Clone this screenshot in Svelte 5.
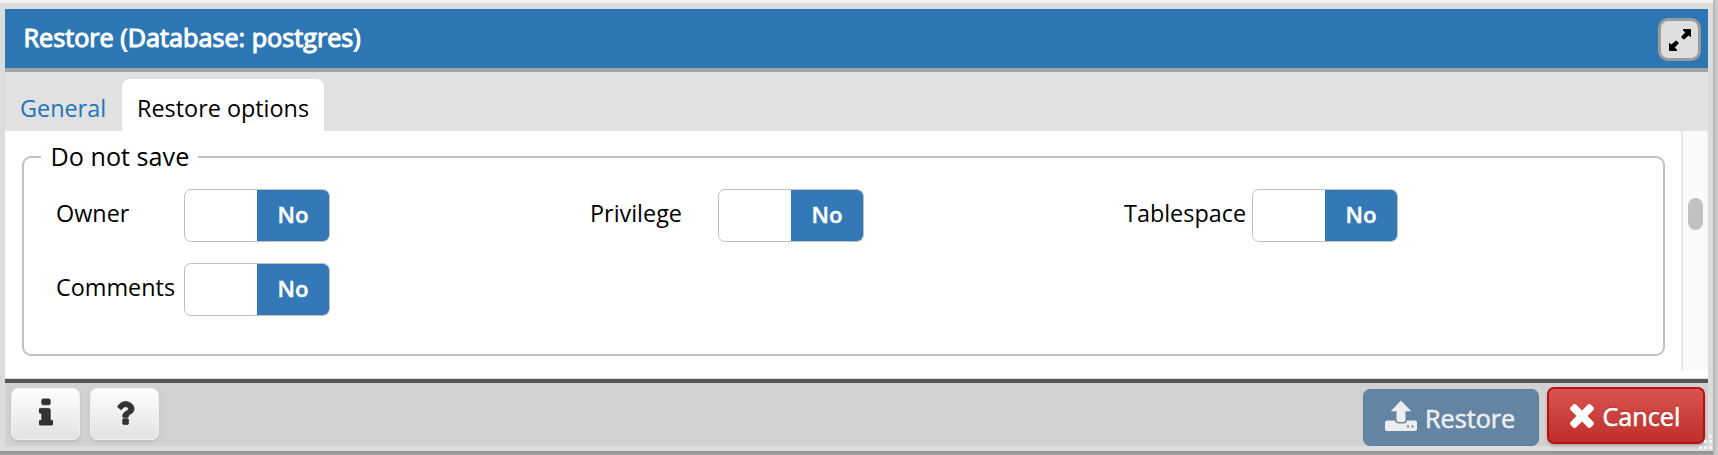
<script>
  const options = [
    { name: 'Owner', value: 'No' },
    { name: 'Privilege', value: 'No' },
    { name: 'Tablespace', value: 'No' },
    { name: 'Comments', value: 'No' }
  ];
</script>

<div class="page">
  <div class="dialog">
    <header>
      <h1>Restore (Database: postgres)</h1>
      <button class="expand" aria-label="Maximize">
        <svg width="24" height="24" viewBox="0 0 24 24">
          <path d="M15 1.5Q15 1 15.5 1H22Q23 1 23 2V8.5Q23 9.5 22.2 8.8L20.6 7.4L16.4 11.2Q15.6 11.6 15 11L13.6 9.6Q13 8.8 13.6 8.2L17.2 4.4L15.2 2.6ZM9 22.5Q9 23 8.5 23H2Q1 23 1 22V15.5Q1 14.5 1.8 15.2L3.4 16.6L7.6 12.8Q8.4 12.4 9 13L10.4 14.4Q11 15.2 10.4 15.8L6.8 19.6L8.8 21.4Z" />
        </svg>
      </button>
    </header>
    <nav>
      <span class="tab link">General</span>
      <span class="tab active">Restore options</span>
    </nav>
    <main>
      <div class="content">
        <section class="group">
          <div class="legend"><span>Do not save</span></div>
          <div class="options">
            {#each options as option}
              <div class="option">
                <span class="name">{option.name}</span>
                <span class="switch"><span class="on">{option.value}</span></span>
              </div>
            {/each}
          </div>
        </section>
      </div>
      <div class="track"><div class="thumb"></div></div>
    </main>
    <footer>
      <button class="small" aria-label="Info">
        <svg width="14" height="28" viewBox="576 80 640 1504" preserveAspectRatio="none"><path d="M1216 1344v128q0 26-19 45t-45 19h-512q-26 0-45-19t-19-45v-128q0-26 19-45t45-19h64v-384h-64q-26 0-45-19t-19-45v-128q0-26 19-45t45-19h384q26 0 45 19t19 45v576h64q26 0 45 19t19 45zm-128-1152v192q0 26-19 45t-45 19h-256q-26 0-45-19t-19-45v-192q0-26 19-45t45-19h256q26 0 45 19t19 45z" /></svg>
      </button>
      <button class="small" aria-label="Help">
        <svg class="question" width="32" height="32" viewBox="0 0 1792 1792"><path d="M1088 1256v240q0 16-12 28t-28 12h-240q-16 0-28-12t-12-28v-240q0-16 12-28t28-12h240q16 0 28 12t12 28zm316-600q0 54-15.5 101t-35 76.5-55 59.5-57.5 43.5-61 35.5q-41 23-68.5 65t-27.5 67q0 17-12 32.5t-28 15.5h-240q-15 0-25.5-18.5t-10.5-37.5v-45q0-83 65-156.5t143-108.5q59-27 84-56t25-76q0-42-46.5-74t-107.5-32q-65 0-108 29-35 25-107 115-13 16-31 16-12 0-25-8l-164-125q-13-10-15.5-25t5.5-28q160-266 464-266 80 0 161 31t146 83 106 127.5 41 158.5z" /></svg>
      </button>
      <div class="actions">
        <button class="action restore">
          <svg width="32" height="32" viewBox="0 0 32 32">
            <path fill-rule="evenodd" d="M16 .5L26.3 11.3H20.5V19.5Q20.5 22 18 22H14Q11.5 22 11.5 19.5V11.3H5.7ZM2 20.5H10Q10.5 23.5 14 23.5H18Q21.5 23.5 22 20.5H30Q32 20.5 32 22.5V29Q32 31 30 31H2Q0 31 0 29V22.5Q0 20.5 2 20.5ZM22 25.5V27.5H24V25.5ZM26.5 25.5V27.5H28.5V25.5Z" />
          </svg>
          <span>Restore</span>
        </button>
        <button class="action cancel">
          <svg width="24" height="24" viewBox="302 434 1188 1188"><path transform="translate(0 68)" d="M1490 1322q0 40-28 68l-136 136q-28 28-68 28t-68-28l-294-294-294 294q-28 28-68 28t-68-28l-136-136q-28-28-28-68t28-68l294-294-294-294q-28-28-28-68t28-68l136-136q28-28 68-28t68 28l294 294 294-294q28-28 68-28t68 28l136 136q28 28 28 68t-28 68l-294 294 294 294q28 28 28 68z" /></svg>
          <span>Cancel</span>
        </button>
      </div>
      <svg class="grip" width="16" height="16" viewBox="0 0 16 16">
        <path d="M12 0h3v3h-3zM7 5h3v3h-3zM12 5h3v3h-3zM2 11h3v3h-3zM7 11h3v3h-3zM12 11h3v3h-3z" />
      </svg>
    </footer>
  </div>
</div>

<style>
  :global(body) { background: #f2f2f2; }
  * { box-sizing: border-box; }
  .page {
    height: 455px;
    padding: 3px 5px 4px 0;
    overflow: hidden;
    background: linear-gradient(to right, #b5b5b5, #d4d4d4) right / 5px 100% no-repeat,
      linear-gradient(#8e8e8e, #a2a2a2) bottom / 100% 4px no-repeat, #f1f1f1;
    font-family: 'Open Sans', sans-serif;
    color: #111;
  }
  .dialog {
    height: 448px;
    display: flex;
    flex-direction: column;
    border: solid #dcdcdc;
    border-width: 6px 5px 5px 5px;
    background: #fff;
  }
  button { font: inherit; padding: 0; margin: 0; display: flex; align-items: center; }
  header {
    height: 63px;
    flex: none;
    display: flex;
    justify-content: space-between;
    align-items: flex-start;
    padding: 9px 7px 0 18.5px;
    background: #2c76b4;
    border-bottom: 4px solid #a3a3a3;
  }
  h1 {
    margin: 1px 0 0;
    font-size: 25.2px;
    line-height: 36px;
    font-weight: 400;
    color: #fff;
    -webkit-text-stroke: 1.1px #fff;
    white-space: nowrap;
  }
  .expand {
    width: 43px;
    height: 43px;
    justify-content: center;
    border: 3px solid #9b9b9b;
    border-radius: 10px;
    background: #dedede;
  }
  nav {
    height: 59px;
    flex: none;
    display: flex;
    align-items: flex-end;
    background: #e1e1e1;
    font-size: 23.4px;
  }
  .tab { height: 52px; line-height: 58px; padding: 0 14px 0 15px; white-space: nowrap; }
  .link { color: #2076b8; width: 117px; }
  .active { background: #fff; border-radius: 8px 8px 0 0; width: 202px; color: #000; }
  main { height: 248px; flex: none; display: flex; background: #fff; }
  .content { flex: 1; padding: 25px 16px 0 17px; }
  .group {
    height: 200px;
    border: 2px solid #c1c1c1;
    border-radius: 9px;
  }
  .legend { height: 31px; margin-top: -19px; padding-left: 17px; display: flex; }
  .legend span {
    width: 157px;
    padding-left: 9.5px;
    background: #fff;
    font-size: 25.2px;
    line-height: 34px;
    white-space: nowrap;
    color: #000;
  }
  .options {
    display: grid;
    grid-template-columns: repeat(3, 534px);
    row-gap: 21px;
    padding: 19px 0 0 32px;
  }
  .option { display: flex; height: 53px; }
  .name { width: 128px; flex: none; font-size: 23.4px; line-height: 49px; color: #000; }
  .switch {
    width: 146px;
    height: 53px;
    display: flex;
    justify-content: flex-end;
    border: 1.5px solid #c0c0c0;
    border-radius: 7px;
    overflow: hidden;
  }
  .on {
    width: 72px;
    background: #3379b7;
    color: #fff;
    text-align: center;
    font-size: 22.3px;
    font-weight: 600;
    line-height: 50px;
    -webkit-text-stroke: 0.4px #fff;
  }
  .track {
    width: 27px;
    height: 239px;
    flex: none;
    padding: 67px 0 0 5px;
    border-left: 2px solid #e7e7e7;
    border-right: 1px solid #f0f0f0;
    background: #fafafa;
  }
  .thumb { width: 15px; height: 32px; border-radius: 8px; background: #c1c1c1; }
  footer {
    position: relative;
    flex: 1;
    display: flex;
    align-items: flex-start;
    gap: 11px;
    padding: 5px 3.5px 0 6px;
    background: #d1d1d1;
    border-top: 4px solid #525652;
    box-shadow: 0 -1px #dedede;
  }
  .small {
    width: 69px;
    height: 52px;
    justify-content: center;
    border: 1px solid #f0f0f0;
    border-radius: 7px;
    background: linear-gradient(#fefefe, #e2e2e2);
    box-shadow: 0 2px 3px #bdbdbd;
    fill: #333;
  }
  .small + .small { margin-left: -1px; }
  .small svg { margin-bottom: 5px; }
  .small svg path { stroke: #222; stroke-width: 35; }
  .small .question { margin-bottom: 3px; }
  .actions { margin-left: auto; display: flex; gap: 7.5px; }
  .action {
    height: 57px;
    border-radius: 7px;
    font-size: 25.2px;
    line-height: 34px;
    white-space: nowrap;
  }
  .restore {
    width: 176px;
    margin-top: 1px;
    padding-left: 21px;
    gap: 8px;
    border: 1px solid #5b7e9e;
    background: #6384a2;
    color: #ededed;
    fill: #ededed;
    -webkit-text-stroke: 0.6px #ededed;
  }
  .restore svg { margin-bottom: 3px; }
  .restore span { margin-top: 1px; }
  .cancel {
    width: 158px;
    margin-top: -1px;
    padding-left: 21px;
    gap: 9px;
    border: 2px solid #b90f12;
    background: linear-gradient(#d9534f, #bf2f2b);
    color: #fff;
    fill: #fff;
    box-shadow: 0 2px 3px #aaa;
    -webkit-text-stroke: 0.6px #fff;
    text-shadow: 0 -1px 1px #a51a18;
  }
  .cancel span { margin-top: 1px; }
  .grip { position: absolute; right: -5px; bottom: -5px; fill: #f4f4f4; }
</style>
